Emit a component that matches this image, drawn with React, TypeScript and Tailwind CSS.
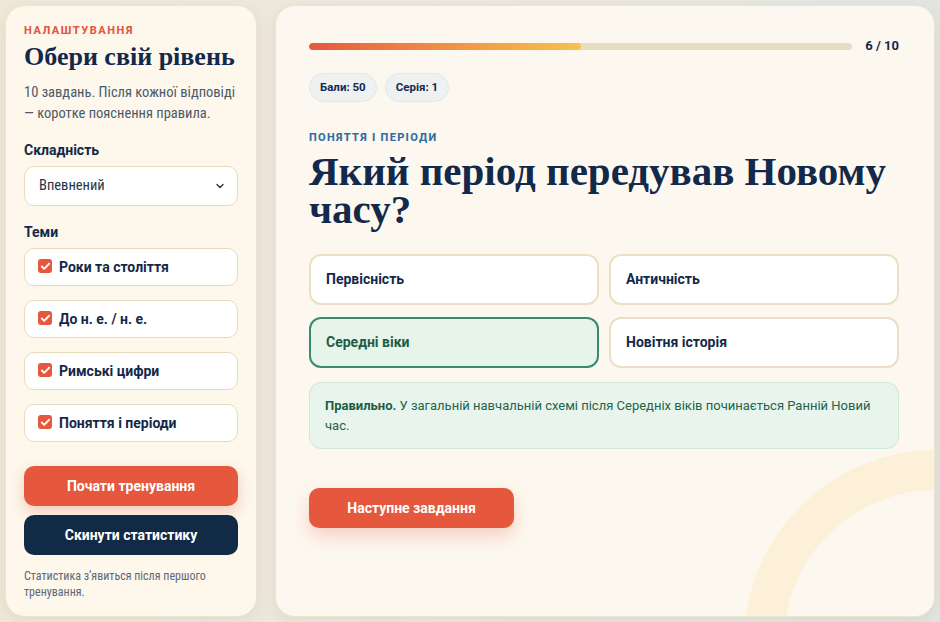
import { Check, ChevronDown } from 'lucide-react';

const topics = ['Роки та століття', 'До н. е. / н. е.', 'Римські цифри', 'Поняття і періоди'];

const options = [
    { label: 'Первісність', state: 'idle' },
    { label: 'Античність', state: 'idle' },
    { label: 'Середні віки', state: 'correct' },
    { label: 'Новітня історія', state: 'idle' },
];

const sans = 'font-["Roboto","Noto_Sans",sans-serif]';
const narrow = 'font-["Roboto_Condensed","Liberation_Sans_Narrow","DejaVu_Sans_Condensed","Roboto",sans-serif]';
const serif = 'font-["Liberation_Serif","DejaVu_Serif",serif]';

export default function App() {
    return (
        <div className={`h-[622px] w-full overflow-hidden bg-gradient-to-r from-[#efe8d9] via-[#ece8df] to-[#e3e5e2] p-[5px] flex gap-[18px] ${sans}`}>
            {/* Sidebar */}
            <aside className="w-[252px] shrink-0 rounded-[20px] bg-[#fdf7ec] border border-[#efe4cf] shadow-[0_4px_14px_rgba(120,100,60,0.10)] px-[18px] pt-[18px] flex flex-col">
                <div className="text-[11px] leading-[14px] font-extrabold uppercase tracking-[0.14em] text-[#e5583e]">Налаштування</div>
                <h1 className={`${serif} mt-[4px] text-[26px] leading-[30px] font-bold text-[#13294b]`}>Обери свій рівень</h1>
                <p className={`${narrow} mt-[10px] text-[14.5px] leading-[21px] text-[#4b5a6b]`}>
                    10 завдань. Після кожної відповіді — коротке пояснення правила.
                </p>

                <div className="mt-[16px] text-[14px] leading-[20px] font-bold text-[#13294b]">Складність</div>
                <div className="mt-[6px] h-[40px] rounded-[10px] border border-[#eadbbd] bg-white flex items-center justify-between pl-[14px] pr-[11px]">
                    <span className={`${narrow} text-[14.5px] text-[#26364a]`}>Впевнений</span>
                    <ChevronDown className="w-[12px] h-[12px] text-[#26364a]" strokeWidth={2.75} />
                </div>

                <div className="mt-[16px] text-[14px] leading-[20px] font-bold text-[#13294b]">Теми</div>
                <div className="mt-[6px] flex flex-col gap-[14px]">
                    {topics.map((t) => (
                        <div key={t} className="h-[38px] rounded-[10px] border border-[#eadbbd] bg-white flex items-center gap-[7px] pl-[13px]">
                            <span className="w-[14px] h-[14px] rounded-[3px] bg-[#e5583e] flex items-center justify-center -mt-[2px]">
                                <Check className="w-[11px] h-[11px] text-white" strokeWidth={4} />
                            </span>
                            <span className="text-[14px] font-bold text-[#13294b]">{t}</span>
                        </div>
                    ))}
                </div>

                <button className="mt-[24px] h-[40px] rounded-[10px] bg-[#e5583e] text-white text-[14px] font-bold shadow-[0_6px_14px_rgba(229,88,62,0.28)]">
                    Почати тренування
                </button>
                <button className="mt-[9px] h-[40px] rounded-[10px] bg-[#112a46] text-white text-[14px] font-bold">
                    Скинути статистику
                </button>
                <p className={`${narrow} mt-[13px] text-[12px] leading-[16px] text-[#5c6877]`}>
                    Статистика з’явиться після першого тренування.
                </p>
            </aside>

            {/* Main */}
            <main className="relative flex-1 overflow-hidden rounded-[20px] bg-[#fdf8ef] border border-[#efe4cf] shadow-[0_4px_14px_rgba(120,100,60,0.10)] pl-[33px] pr-[35px] pt-[31px]">
                {/* decorative ring */}
                <div className="absolute left-[468px] top-[444px] w-[384px] h-[384px] rounded-full border-[40px] border-[#fcf0d9] pointer-events-none" />

                <div className="relative">
                    <div className="flex items-center gap-[12px]">
                        <div className="flex-1 h-[7px] rounded-full bg-[#e9dcc4] overflow-hidden">
                            <div className="h-full w-[50%] rounded-full bg-gradient-to-r from-[#e5583e] to-[#f6c24e]" />
                        </div>
                        <span className="w-[35px] text-right text-[13px] leading-[18px] font-bold text-[#13294b]">6 / 10</span>
                    </div>

                    <div className="mt-[18px] flex gap-[8px]">
                        <span className="h-[29px] px-[10px] rounded-full bg-[#eef1f2] border border-[#e2e7ea] flex items-center text-[11.5px] font-bold text-[#13294b]">Бали: 50</span>
                        <span className="h-[29px] px-[10px] rounded-full bg-[#eef1f2] border border-[#e2e7ea] flex items-center text-[11.5px] font-bold text-[#13294b]">Серія: 1</span>
                    </div>

                    <div className="mt-[28px] text-[11px] leading-[16px] font-extrabold uppercase tracking-[0.12em] text-[#2f6fa3]">Поняття і періоди</div>
                    <h2 className={`${serif} mt-[6px] text-[41px] leading-[38px] font-bold text-[#13294b]`}>
                        Який період передував Новому часу?
                    </h2>

                    <div className="mt-[26px] grid grid-cols-2 gap-x-[10px] gap-y-[12px]">
                        {options.map((o) =>
                            o.state === 'correct' ? (
                                <div key={o.label} className="h-[51px] rounded-[12px] border-2 border-[#3c8a6d] bg-[#e6f4ea] flex items-center px-[15px] text-[14px] font-bold text-[#1d5d45]">
                                    {o.label}
                                </div>
                            ) : (
                                <div key={o.label} className="h-[51px] rounded-[12px] border-2 border-[#ecdfc6] bg-white flex items-center px-[15px] text-[14px] font-bold text-[#13294b]">
                                    {o.label}
                                </div>
                            )
                        )}
                    </div>

                    <p className="mt-[14px] rounded-[12px] border border-[#cfe8da] bg-[#e7f5ed] px-[15px] pt-[13px] pb-[12px] text-[13px] leading-[20px] text-[#24634a]">
                        <b className="font-bold text-[#1d5d45]">Правильно.</b> У загальній навчальній схемі після Середніх віків починається Ранній Новий час.
                    </p>

                    <button className="mt-[39px] h-[40px] w-[205px] rounded-[10px] bg-[#e5583e] text-white text-[14px] font-bold shadow-[0_8px_18px_rgba(229,88,62,0.25)]">
                        Наступне завдання
                    </button>
                </div>
            </main>
        </div>
    );
}
